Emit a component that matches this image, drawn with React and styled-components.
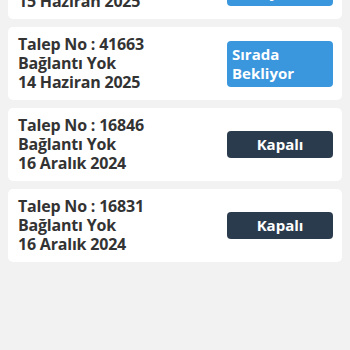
import React from "react";
import styled, { createGlobalStyle } from "styled-components";

const Global = createGlobalStyle`
  html, body { margin: 0; padding: 0; background: #f2f2f2; }
  body { font-family: "Open Sans", "Liberation Sans", sans-serif; }
`;

const Viewport = styled.div`
  width: 350px;
  height: 350px;
  overflow: hidden;
  background: #f2f2f2;
`;

const List = styled.div`
  display: flex;
  flex-direction: column;
  gap: 8px;
  padding: 0 8px;
  margin-top: -54px;
`;

const Card = styled.div`
  background: #ffffff;
  border-radius: 5px;
  height: 73px;
  box-sizing: border-box;
  padding: 7px 9px 7px 10px;
  display: flex;
  align-items: center;
  justify-content: space-between;
`;

const Info = styled.div`
  display: flex;
  flex-direction: column;
  color: #333333;
  font-weight: 700;
  font-size: 16px;
  line-height: 19px;
  letter-spacing: -0.2px;
`;

const Badge = styled.div`
  width: 106px;
  box-sizing: border-box;
  border-radius: 4px;
  color: #ffffff;
  font-weight: 700;
  font-size: 15px;
  line-height: 19px;
  background: ${(p) => (p.$status === "wait" ? "#3a96dd" : "#2b3b4e")};
  padding: 4px 5px;
  text-align: ${(p) => (p.$status === "wait" ? "left" : "center")};
`;

const items = [
  { no: "41664", date: "15 Haziran 2025", status: "wait" },
  { no: "41663", date: "14 Haziran 2025", status: "wait" },
  { no: "16846", date: "16 Aralık 2024", status: "closed" },
  { no: "16831", date: "16 Aralık 2024", status: "closed" },
];

export default function App() {
  return (
    <>
      <Global />
      <Viewport>
        <List>
          {items.map((it) => (
            <Card key={it.no}>
              <Info>
                <span>Talep No : {it.no}</span>
                <span>Bağlantı Yok</span>
                <span>{it.date}</span>
              </Info>
              <Badge $status={it.status}>
                {it.status === "wait" ? (
                  <>
                    Sırada
                    <br />
                    Bekliyor
                  </>
                ) : (
                  "Kapalı"
                )}
              </Badge>
            </Card>
          ))}
        </List>
      </Viewport>
    </>
  );
}
